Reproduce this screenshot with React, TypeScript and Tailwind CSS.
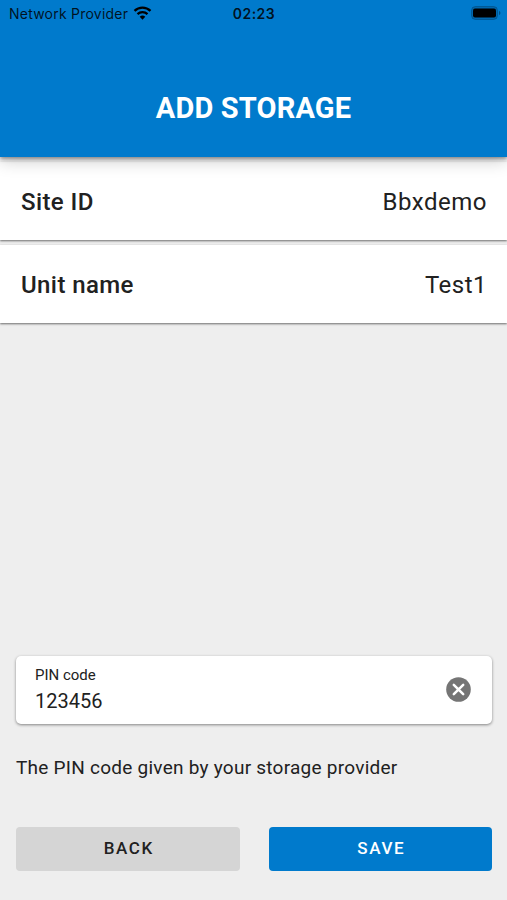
import { useState } from 'react';
import type { ReactNode } from 'react';

interface InfoRowProps {
  label: string;
  value: string;
}

function StatusBar() {
  return (
    <div className="grid grid-cols-3 items-center h-[26px] pl-[9px] pr-[6px] text-black/85 font-['Inter',sans-serif] text-[14px]">
      <div className="flex items-center gap-[5px] whitespace-nowrap">
        <span className="tracking-[0.23px]">Network Provider</span>
        <svg width="19" height="14" viewBox="0 0 18 14" className="shrink-0 text-black">
          <g fill="none" stroke="currentColor" strokeWidth="2.3">
            <path d="M1 4.9a11.5 11.5 0 0 1 16 0" />
            <path d="M4 8.1a7.2 7.2 0 0 1 10 0" />
          </g>
          <path fill="currentColor" d="M9 13.7 6.2 10.8a4 4 0 0 1 5.6 0Z" />
        </svg>
      </div>
      <span className="-ml-[2px] text-center font-semibold tracking-[0.45px]">02:23</span>
      <svg width="30" height="14" viewBox="0 0 30 14" className="justify-self-end">
        <rect x="0.5" y="0.5" width="26" height="13" rx="4" fill="#000" fillOpacity="0.15" stroke="#000" strokeOpacity="0.2" />
        <rect x="2" y="2.500" width="23" height="9" rx="2" fill="#000" />
        <path d="M28 5v4c.9-.4 1.400-1.100 1.400-2S28.900 5.400 28 5Z" fill="#000" fillOpacity="0.35" />
      </svg>
    </div>
  );
}

function InfoRow({ label, value }: InfoRowProps) {
  return (
    <div className="flex items-center justify-between h-[78px] pt-px pl-[21px] pr-5 bg-white text-2xl text-[#212121] shadow-[0_1px_2px_rgba(0,0,0,0.55)]">
      <span className="font-medium tracking-[0.4px]">{label}</span>
      <span className="tracking-[0.5px]">{value}</span>
    </div>
  );
}

function Button({ className, children }: { className: string; children: ReactNode }) {
  return (
    <button className={`flex-1 h-11 pl-[2px] rounded-[4px] text-[17px] font-medium tracking-[1.6px] ${className}`}>
      {children}
    </button>
  );
}

export default function App() {
  const [pin, setPin] = useState('123456');

  return (
    <div className="flex flex-col h-[900px] bg-[#eeeeee] font-['Roboto',sans-serif] text-[#212121] overflow-hidden">
      <header className="relative z-10 h-[157px] shrink-0 bg-[#007acc] shadow-[0_2px_4px_rgba(0,0,0,0.4),0_4px_16px_rgba(0,0,0,0.2)]">
        <StatusBar />
        <h1 className="mt-[62px] text-center text-[29px] leading-10 font-bold text-white tracking-[0.15px]">ADD STORAGE</h1>
      </header>

      <div className="flex flex-col gap-[5px] -mt-px">
        <div className="pt-[6px] bg-white">
          <InfoRow label="Site ID" value="Bbxdemo" />
        </div>
        <InfoRow label="Unit name" value="Test1" />
      </div>

      <div className="mt-auto pl-4 pr-[15px] pb-[29px]">
        <div className="flex items-center justify-between h-[68px] pl-[19px] pr-[21px] rounded-[5px] bg-white shadow-[0_1px_3px_rgba(0,0,0,0.45)]">
          <label className="flex flex-col">
            <span className="text-[15px] leading-5">PIN code</span>
            <input
              value={pin}
              onChange={(e) => setPin(e.target.value)}
              className="mt-[2px] mb-px w-60 text-[20px] leading-7 outline-none"
            />
          </label>
          <button onClick={() => setPin('')} aria-label="Clear" className="mb-px">
            <svg width="25" height="25" viewBox="0 0 25 25">
              <circle cx="12.500" cy="12.500" r="12.300" fill="#757575" />
              <path d="m7.800 7.800 9.400 9.400m0-9.400-9.400 9.400" stroke="#fff" strokeWidth="2.500" strokeLinecap="round" />
            </svg>
          </button>
        </div>
        <p className="mt-[30px] text-[19px] leading-7 tracking-[0.25px]">The PIN code given by your storage provider</p>
        <div className="flex gap-[29px] mt-[45px]">
          <Button className="bg-[#d5d5d5] text-[#212121]">BACK</Button>
          <Button className="bg-[#007acc] text-white">SAVE</Button>
        </div>
      </div>
    </div>
  );
}
